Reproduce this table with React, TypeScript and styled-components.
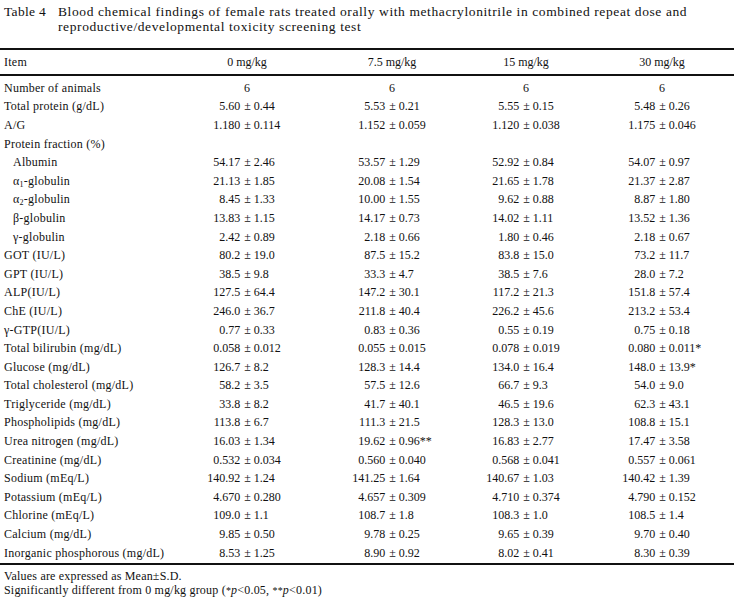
import styled, { createGlobalStyle } from "styled-components";

const GlobalStyle = createGlobalStyle`
  body {
    margin: 0;
    background: #fff;
    color: #111;
    font-family: "Liberation Serif", "Times New Roman", serif;
  }
`;

type Cell = [string, string] | string | null;

interface RowData {
  label: React.ReactNode;
  indent?: boolean;
  cells: Cell[];
}

const Greek = ({ c, sub }: { c: string; sub?: string }) => (
  <>
    {c}
    {sub && <Sub>{sub}</Sub>}-
  </>
);

const rows: RowData[] = [
  { label: "Number of animals", cells: ["6", "6", "6", "6"] },
  {
    label: "Total protein (g/dL)",
    cells: [
      ["5.60", "0.44"],
      ["5.53", "0.21"],
      ["5.55", "0.15"],
      ["5.48", "0.26"],
    ],
  },
  {
    label: "A/G",
    cells: [
      ["1.180", "0.114"],
      ["1.152", "0.059"],
      ["1.120", "0.038"],
      ["1.175", "0.046"],
    ],
  },
  { label: "Protein fraction (%)", cells: [null, null, null, null] },
  {
    label: "Albumin",
    indent: true,
    cells: [
      ["54.17", "2.46"],
      ["53.57", "1.29"],
      ["52.92", "0.84"],
      ["54.07", "0.97"],
    ],
  },
  {
    label: (
      <>
        <Greek c="α" sub="1" />
        globulin
      </>
    ),
    indent: true,
    cells: [
      ["21.13", "1.85"],
      ["20.08", "1.54"],
      ["21.65", "1.78"],
      ["21.37", "2.87"],
    ],
  },
  {
    label: (
      <>
        <Greek c="α" sub="2" />
        globulin
      </>
    ),
    indent: true,
    cells: [
      ["8.45", "1.33"],
      ["10.00", "1.55"],
      ["9.62", "0.88"],
      ["8.87", "1.80"],
    ],
  },
  {
    label: "β-globulin",
    indent: true,
    cells: [
      ["13.83", "1.15"],
      ["14.17", "0.73"],
      ["14.02", "1.11"],
      ["13.52", "1.36"],
    ],
  },
  {
    label: "γ-globulin",
    indent: true,
    cells: [
      ["2.42", "0.89"],
      ["2.18", "0.66"],
      ["1.80", "0.46"],
      ["2.18", "0.67"],
    ],
  },
  {
    label: "GOT (IU/L)",
    cells: [
      ["80.2", "19.0"],
      ["87.5", "15.2"],
      ["83.8", "15.0"],
      ["73.2", "11.7"],
    ],
  },
  {
    label: "GPT (IU/L)",
    cells: [
      ["38.5", "9.8"],
      ["33.3", "4.7"],
      ["38.5", "7.6"],
      ["28.0", "7.2"],
    ],
  },
  {
    label: "ALP(IU/L)",
    cells: [
      ["127.5", "64.4"],
      ["147.2", "30.1"],
      ["117.2", "21.3"],
      ["151.8", "57.4"],
    ],
  },
  {
    label: "ChE (IU/L)",
    cells: [
      ["246.0", "36.7"],
      ["211.8", "40.4"],
      ["226.2", "45.6"],
      ["213.2", "53.4"],
    ],
  },
  {
    label: "γ-GTP(IU/L)",
    cells: [
      ["0.77", "0.33"],
      ["0.83", "0.36"],
      ["0.55", "0.19"],
      ["0.75", "0.18"],
    ],
  },
  {
    label: "Total bilirubin (mg/dL)",
    cells: [
      ["0.058", "0.012"],
      ["0.055", "0.015"],
      ["0.078", "0.019"],
      ["0.080", "0.011*"],
    ],
  },
  {
    label: "Glucose (mg/dL)",
    cells: [
      ["126.7", "8.2"],
      ["128.3", "14.4"],
      ["134.0", "16.4"],
      ["148.0", "13.9*"],
    ],
  },
  {
    label: "Total cholesterol (mg/dL)",
    cells: [
      ["58.2", "3.5"],
      ["57.5", "12.6"],
      ["66.7", "9.3"],
      ["54.0", "9.0"],
    ],
  },
  {
    label: "Triglyceride (mg/dL)",
    cells: [
      ["33.8", "8.2"],
      ["41.7", "40.1"],
      ["46.5", "19.6"],
      ["62.3", "43.1"],
    ],
  },
  {
    label: "Phospholipids (mg/dL)",
    cells: [
      ["113.8", "6.7"],
      ["111.3", "21.5"],
      ["128.3", "13.0"],
      ["108.8", "15.1"],
    ],
  },
  {
    label: "Urea nitrogen (mg/dL)",
    cells: [
      ["16.03", "1.34"],
      ["19.62", "0.96**"],
      ["16.83", "2.77"],
      ["17.47", "3.58"],
    ],
  },
  {
    label: "Creatinine (mg/dL)",
    cells: [
      ["0.532", "0.034"],
      ["0.560", "0.040"],
      ["0.568", "0.041"],
      ["0.557", "0.061"],
    ],
  },
  {
    label: "Sodium (mEq/L)",
    cells: [
      ["140.92", "1.24"],
      ["141.25", "1.64"],
      ["140.67", "1.03"],
      ["140.42", "1.39"],
    ],
  },
  {
    label: "Potassium (mEq/L)",
    cells: [
      ["4.670", "0.280"],
      ["4.657", "0.309"],
      ["4.710", "0.374"],
      ["4.790", "0.152"],
    ],
  },
  {
    label: "Chlorine (mEq/L)",
    cells: [
      ["109.0", "1.1"],
      ["108.7", "1.8"],
      ["108.3", "1.0"],
      ["108.5", "1.4"],
    ],
  },
  {
    label: "Calcium (mg/dL)",
    cells: [
      ["9.85", "0.50"],
      ["9.78", "0.25"],
      ["9.65", "0.39"],
      ["9.70", "0.40"],
    ],
  },
  {
    label: "Inorganic phosphorous (mg/dL)",
    cells: [
      ["8.53", "1.25"],
      ["8.90", "0.92"],
      ["8.02", "0.41"],
      ["8.30", "0.39"],
    ],
  },
];

const doses = ["0 mg/kg", "7.5 mg/kg", "15 mg/kg", "30 mg/kg"];

const Page = styled.div`
  width: 734px;
  font-size: 12px;
`;

const Caption = styled.div`
  display: flex;
  padding: 5px 0 0 4px;
  font-size: 13.5px;
  line-height: 14.5px;
`;

const CaptionLabel = styled.div`
  width: 54px;
  flex-shrink: 0;
  letter-spacing: 0.3px;
`;

const CaptionText = styled.div`
  white-space: nowrap;
  letter-spacing: 0.6px;
`;

const Table = styled.div`
  margin-top: 14px;
  border-top: 2px solid #111;
  border-bottom: 2px solid #111;
`;

const Row = styled.div<{ $head?: boolean }>`
  display: grid;
  grid-template-columns: 172px 150px 140px 128px 144px;
  align-items: center;
  height: ${(p) => (p.$head ? "24px" : "18.6px")};
  ${(p) => p.$head && "border-bottom: 2px solid #111; margin-bottom: 3px;"}
`;

const Body = styled.div`
  padding-bottom: 1px;
`;

const Label = styled.div<{ $indent?: boolean }>`
  padding-left: ${(p) => (p.$indent ? "13px" : "4px")};
  white-space: nowrap;
  letter-spacing: 0.25px;
`;

const Centered = styled.div`
  text-align: center;
  white-space: nowrap;
`;

const Value = styled.div`
  display: grid;
  grid-template-columns: 1fr auto 1fr;
  white-space: nowrap;
`;

const Mean = styled.span`
  text-align: right;
`;

const Pm = styled.span`
  padding: 0 3px 0 4px;
`;

const Sd = styled.span`
  text-align: left;
`;

const Sub = styled.sub`
  font-size: 8px;
  vertical-align: -2px;
  line-height: 0;
`;

const Notes = styled.div`
  padding: 4px 0 0 4px;
  line-height: 14px;
  letter-spacing: 0.2px;
`;

const Star = styled.span`
  font-size: 10px;
`;

function renderCell(c: Cell, i: number) {
  if (c === null) return <div key={i} />;
  if (typeof c === "string") return <Centered key={i}>{c}</Centered>;
  return (
    <Value key={i}>
      <Mean>{c[0]}</Mean>
      <Pm>±</Pm>
      <Sd>{c[1]}</Sd>
    </Value>
  );
}

export default function App() {
  return (
    <Page>
      <GlobalStyle />
      <Caption>
        <CaptionLabel>Table 4</CaptionLabel>
        <CaptionText>
          Blood chemical findings of female rats treated orally with methacrylonitrile in combined repeat dose and
          <br />
          reproductive/developmental toxicity screening test
        </CaptionText>
      </Caption>
      <Table>
        <Row $head>
          <Label>Item</Label>
          {doses.map((d) => (
            <Centered key={d}>{d}</Centered>
          ))}
        </Row>
        <Body>
          {rows.map((r, i) => (
            <Row key={i}>
              <Label $indent={r.indent}>{r.label}</Label>
              {r.cells.map(renderCell)}
            </Row>
          ))}
        </Body>
      </Table>
      <Notes>
        <div>Values are expressed as Mean±S.D.</div>
        <div>
          Significantly different from 0 mg/kg group (<Star>*</Star>
          <i>p</i>&lt;0.05, <Star>**</Star>
          <i>p</i>&lt;0.01)
        </div>
      </Notes>
    </Page>
  );
}
